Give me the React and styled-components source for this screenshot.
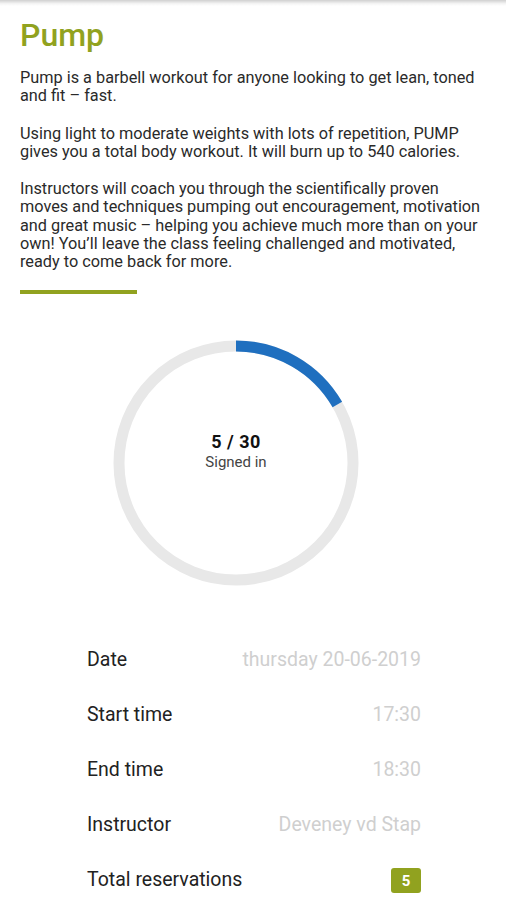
import React from 'react'
import styled, { createGlobalStyle } from 'styled-components'

const GlobalStyle = createGlobalStyle`
  html, body {
    margin: 0;
    padding: 0;
    background: #fff;
  }
  body {
    font-family: Roboto, "Liberation Sans", sans-serif;
    color: #222;
  }
`

const GREEN = '#91a21f'

const Page = styled.div`
  width: 506px;
  min-height: 900px;
  overflow: hidden;
`

const TopShadow = styled.div`
  height: 6px;
  background: linear-gradient(to bottom, #d0d0d0, #f4f4f4 60%, #fff);
`

const Content = styled.div`
  padding: 9px 20px 0 20px;
`

const Title = styled.h1`
  margin: 0 0 14px 0;
  font-size: 32px;
  font-weight: 500;
  color: ${GREEN};
  line-height: 40px;
`

const Paragraph = styled.p`
  margin: 0 0 19px 0;
  font-size: 16.3px;
  line-height: 18.3px;
  color: #2a2a2a;
`

const Divider = styled.div`
  width: 117px;
  height: 4px;
  background: ${GREEN};
  margin-top: -1px;
`

const ChartWrap = styled.div`
  position: relative;
  width: 246px;
  height: 246px;
  margin: 46px 0 0 113px;
`

const ChartLabel = styled.div`
  position: absolute;
  inset: 0;
  display: flex;
  flex-direction: column;
  align-items: center;
  justify-content: center;
  padding-bottom: 23px;
`

const Count = styled.div`
  font-size: 18px;
  font-weight: 700;
  color: #111;
  line-height: 22px;
  letter-spacing: 0.5px;
`

const Caption = styled.div`
  font-size: 15px;
  color: #444;
  line-height: 18px;
`

const Details = styled.div`
  margin: 46px 85px 0 87px;
  display: flex;
  flex-direction: column;
`

const Row = styled.div`
  display: flex;
  justify-content: space-between;
  align-items: center;
  height: 55px;
`

const Label = styled.span`
  font-size: 19.5px;
  color: #222;
`

const Value = styled.span`
  font-size: 19.5px;
  color: #cfcfcf;
`

const Badge = styled.span`
  background: ${GREEN};
  color: #fff;
  font-size: 15px;
  font-weight: 700;
  border-radius: 3px;
  width: 30px;
  height: 25px;
  margin-top: 3px;
  display: inline-flex;
  align-items: center;
  justify-content: center;
`

function Ring({ value, total }) {
  const r = 117
  const c = 2 * Math.PI * r
  const frac = value / total
  return (
    <svg width="246" height="246" viewBox="0 0 246 246">
      <circle cx="123" cy="123" r={r} fill="none" stroke="#e8e8e8" strokeWidth="11" />
      <circle
        cx="123"
        cy="123"
        r={r}
        fill="none"
        stroke="#1f6fbf"
        strokeWidth="11"
        strokeDasharray={`${c * frac} ${c}`}
        transform="rotate(-90 123 123)"
      />
    </svg>
  )
}

const details = [
  { label: 'Date', value: 'thursday 20-06-2019' },
  { label: 'Start time', value: '17:30' },
  { label: 'End time', value: '18:30' },
  { label: 'Instructor', value: 'Deveney vd Stap' },
]

export default function App() {
  return (
    <Page>
      <GlobalStyle />
      <TopShadow />
      <Content>
        <Title>Pump</Title>
        <Paragraph>
          Pump is a barbell workout for anyone looking to get lean, toned and fit – fast.
        </Paragraph>
        <Paragraph>
          Using light to moderate weights with lots of repetition, PUMP gives you a total body workout. It will burn up to 540 calories.
        </Paragraph>
        <Paragraph>
          Instructors will coach you through the scientifically proven moves and techniques pumping out encouragement, motivation and great music – helping you achieve much more than on your own! You’ll leave the class feeling challenged and motivated, ready to come back for more.
        </Paragraph>
        <Divider />
      </Content>
      <ChartWrap>
        <Ring value={5} total={30} />
        <ChartLabel>
          <Count>5 / 30</Count>
          <Caption>Signed in</Caption>
        </ChartLabel>
      </ChartWrap>
      <Details>
        {details.map(d => (
          <Row key={d.label}>
            <Label>{d.label}</Label>
            <Value>{d.value}</Value>
          </Row>
        ))}
        <Row>
          <Label>Total reservations</Label>
          <Badge>5</Badge>
        </Row>
      </Details>
    </Page>
  )
}
